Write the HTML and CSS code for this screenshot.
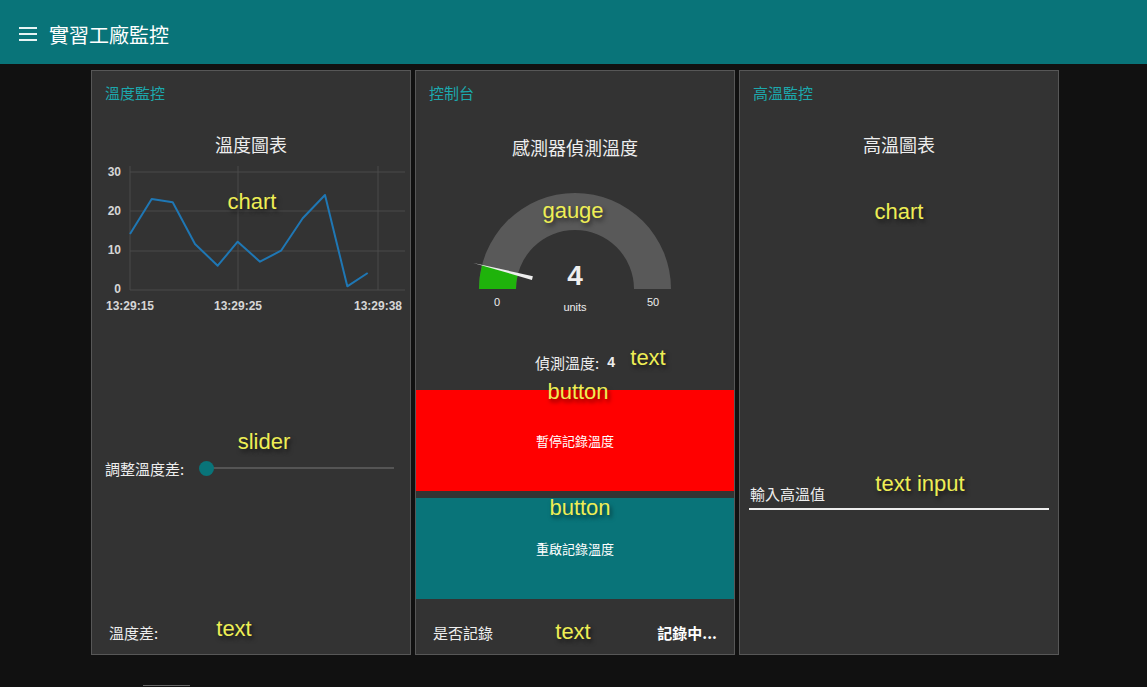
FILE: index.html
```html
<!DOCTYPE html>
<html lang="zh-Hant">
<head>
<meta charset="utf-8">
<title>實習工廠監控</title>
<link rel="stylesheet" href="styles.css">
</head>
<body>
<header class="topbar">
  <svg class="menu-icon" width="18" height="14" viewBox="0 0 18 14"><rect x="0" y="0" width="18" height="2"/><rect x="0" y="6" width="18" height="2"/><rect x="0" y="12" width="18" height="2"/></svg>
  <span class="app-title">實習工廠監控</span>
</header>
<main class="groups">
  <section class="card">
    <div class="group-title">溫度監控</div>
    <div class="chart-widget">
      <div class="widget-title">溫度圖表</div>
      <svg class="chart" width="318" height="164" viewBox="0 0 318 164">
        <g class="grid">
          <line x1="38" y1="16" x2="313" y2="16"/>
          <line x1="38" y1="55" x2="313" y2="55"/>
          <line x1="38" y1="95" x2="313" y2="95"/>
          <line x1="38" y1="134" x2="313" y2="134"/>
          <line x1="38" y1="10" x2="38" y2="134"/>
          <line x1="146" y1="10" x2="146" y2="134"/>
          <line x1="286" y1="10" x2="286" y2="134"/>
        </g>
        <g class="axis-y">
          <text x="29" y="16">30</text>
          <text x="29" y="55">20</text>
          <text x="29" y="94">10</text>
          <text x="29" y="133">0</text>
        </g>
        <g class="axis-x">
          <text x="38" y="150">13:29:15</text>
          <text x="146" y="150">13:29:25</text>
          <text x="286" y="150">13:29:38</text>
        </g>
        <polyline class="series" points="38,78 59.7,43 80.7,46.3 103,88 125.7,109.7 145.7,85.7 168,105.7 189,94.7 210.7,62.3 233,39 255.3,130.3 275.7,117"/>
      </svg>
    </div>
    <div class="slider-row">
      <span class="row-label">調整溫度差:</span>
      <div class="slider"><span class="thumb"></span><span class="track"></span></div>
    </div>
    <div class="text-row bottom-row">
      <span>溫度差:</span><span></span>
    </div>
    <span class="tag tag-chart1">chart</span>
    <span class="tag tag-slider">slider</span>
    <span class="tag tag-text1">text</span>
  </section>

  <section class="card">
    <div class="group-title">控制台</div>
    <div class="gauge-widget">
      <div class="widget-title gauge-title">感測器偵測溫度</div>
      <svg class="gauge" width="318" height="150" viewBox="0 0 318 150">
        <path class="gauge-bg" d="M63,118 A96,96 0 0 1 255,118 L218,118 A59,59 0 0 0 100,118 Z"/>
        <path class="gauge-fill" d="M63,118 A96,96 0 0 1 66,94.1 L101.85,103.3 A59,59 0 0 0 100,118 Z"/>
        <polygon class="needle" points="57.3,91.9 116.9,105.2 115.9,109"/>
        <text class="gauge-value" x="159" y="114">4</text>
        <text class="gauge-units" x="159" y="140">units</text>
        <text class="gauge-minmax" x="81" y="135">0</text>
        <text class="gauge-minmax" x="237" y="135">50</text>
      </svg>
    </div>
    <div class="value-row"><span>偵測溫度:</span><b>4</b></div>
    <button class="btn btn-red">暫停記錄溫度</button>
    <button class="btn btn-teal">重啟記錄溫度</button>
    <div class="text-row bottom-row">
      <span>是否記錄</span><b>記錄中...</b>
    </div>
    <span class="tag tag-gauge">gauge</span>
    <span class="tag tag-text2">text</span>
    <span class="tag tag-btn1">button</span>
    <span class="tag tag-btn2">button</span>
    <span class="tag tag-text3">text</span>
  </section>

  <section class="card">
    <div class="group-title">高溫監控</div>
    <div class="chart-widget empty-chart">
      <div class="widget-title">高溫圖表</div>
    </div>
    <div class="input-row">
      <span class="input-label">輸入高溫值</span>
    </div>
    <span class="tag tag-chart3">chart</span>
    <span class="tag tag-input">text input</span>
  </section>
</main>
<div class="peek"></div>
</body>
</html>
```
FILE: styles.css
```css
html, body {
  margin: 0;
  padding: 0;
  background: #111111;
  overflow: hidden;
}
body {
  font-family: "Liberation Sans", "Noto Sans CJK TC", sans-serif;
  color: #eeeeee;
  height: 687px;
}
.topbar {
  height: 64px;
  background: #097479;
  display: flex;
  align-items: center;
  padding-left: 19px;
  box-sizing: border-box;
}
.menu-icon {
  fill: #e6f4f4;
  margin-right: 12px;
  margin-top: 3px;
}
.app-title {
  font-family: "Noto Sans CJK TC", sans-serif;
  font-size: 20px;
  color: #ffffff;
  line-height: 24px;
  margin-top: 5px;
}
.groups {
  display: flex;
  gap: 4px;
  padding: 6px 0 0 91px;
}
.card {
  position: relative;
  width: 320px;
  height: 585px;
  box-sizing: border-box;
  background: #333333;
  border: 1px solid #575757;
  display: flex;
  flex-direction: column;
  font-family: "Noto Sans CJK TC", "Liberation Sans", sans-serif;
}
.group-title {
  height: 40px;
  box-sizing: border-box;
  padding: 12px 0 0 13px;
  font-size: 15px;
  line-height: 20px;
  color: #1ca8ad;
}
.chart-widget {
  height: 210px;
}
.widget-title {
  margin-top: 21px;
  text-align: center;
  font-size: 18px;
  line-height: 24px;
  color: #eeeeee;
}
.chart {
  display: block;
}
.grid line {
  stroke: #4a4a4a;
  stroke-width: 1;
}
.axis-y text {
  font-family: "Liberation Sans", sans-serif;
  font-weight: bold;
  font-size: 12px;
  fill: #d6d6d6;
  text-anchor: end;
  dominant-baseline: central;
}
.axis-x text {
  font-family: "Liberation Sans", sans-serif;
  font-weight: bold;
  font-size: 12px;
  fill: #d6d6d6;
  text-anchor: middle;
  dominant-baseline: central;
}
.series {
  fill: none;
  stroke: #1f77b4;
  stroke-width: 2;
  stroke-linejoin: round;
}
.slider-row {
  margin-top: 129px;
  height: 36px;
  display: flex;
  align-items: center;
  padding-left: 13px;
  padding-right: 16px;
}
.row-label {
  font-size: 15px;
  color: #eeeeee;
  white-space: nowrap;
  margin-right: 15px;
}
.slider {
  position: relative;
  flex: 1;
  height: 16px;
  display: flex;
  align-items: center;
}
.track {
  flex: 1;
  height: 2px;
  background: #555555;
}
.thumb {
  width: 15px;
  height: 15px;
  border-radius: 50%;
  background: #097479;
  margin-right: -7px;
  position: relative;
  z-index: 1;
}
.text-row {
  height: 36px;
  display: flex;
  justify-content: space-between;
  align-items: center;
  padding: 0 17px;
  font-size: 15px;
  color: #eeeeee;
}
.bottom-row {
  margin-top: auto;
  margin-bottom: 4px;
}
.text-row b {
  font-weight: bold;
  color: #ffffff;
}
.gauge-widget {
  height: 229px;
}
.gauge-title {
  margin-top: 24px;
}
.gauge {
  display: block;
  margin-top: 12px;
}
.gauge-bg {
  fill: #595959;
}
.gauge-fill {
  fill: #1fb30b;
}
.needle {
  fill: #eeeeee;
}
.gauge-value {
  font-family: "Liberation Sans", sans-serif;
  font-size: 28px;
  font-weight: bold;
  fill: #eeeeee;
  text-anchor: middle;
}
.gauge-units {
  font-family: "Liberation Sans", sans-serif;
  font-size: 11px;
  fill: #eeeeee;
  text-anchor: middle;
}
.gauge-minmax {
  font-family: "Liberation Sans", sans-serif;
  font-size: 11px;
  fill: #eeeeee;
  text-anchor: middle;
}
.value-row {
  height: 44px;
  display: flex;
  justify-content: center;
  align-items: center;
  gap: 8px;
  font-size: 15px;
  color: #eeeeee;
}
.value-row b {
  font-family: "Liberation Sans", sans-serif;
  font-size: 14px;
  font-weight: bold;
}
.btn {
  display: block;
  width: 100%;
  height: 101px;
  border: none;
  margin: 6px 0 0 0;
  padding: 0;
  font-family: "Noto Sans CJK TC", sans-serif;
  font-size: 13px;
  color: #ffffff;
}
.btn-red {
  background: #ff0000;
}
.btn-teal {
  background: #097479;
  margin-top: 7px;
}
.empty-chart {
  height: 369px;
}
.input-row {
  margin: 0 9px;
  height: 30px;
  border-bottom: 2px solid #eeeeee;
  display: flex;
  align-items: flex-end;
  padding-left: 1px;
  padding-bottom: 5px;
  box-sizing: border-box;
}
.input-label {
  font-size: 15px;
  color: #eeeeee;
  line-height: 18px;
}
.tag {
  position: absolute;
  font-family: "Liberation Sans", sans-serif;
  font-size: 22px;
  line-height: 26px;
  color: #eeee55;
  text-shadow: 2px 3px 4px rgba(0, 0, 0, 0.55);
  white-space: nowrap;
  transform: translate(-50%, -50%);
}
.tag-chart1 { left: 160px; top: 131px; }
.tag-slider { left: 172px; top: 371px; }
.tag-text1 { left: 142px; top: 558px; }
.tag-gauge { left: 157px; top: 140px; }
.tag-text2 { left: 232px; top: 287px; }
.tag-btn1 { left: 162px; top: 321px; }
.tag-btn2 { left: 164px; top: 437px; }
.tag-text3 { left: 157px; top: 561px; }
.tag-chart3 { left: 159px; top: 141px; }
.tag-input { left: 180px; top: 413px; }
.peek {
  margin: 30px 0 0 143px;
  width: 47px;
  height: 1px;
  background: #666666;
}
```
